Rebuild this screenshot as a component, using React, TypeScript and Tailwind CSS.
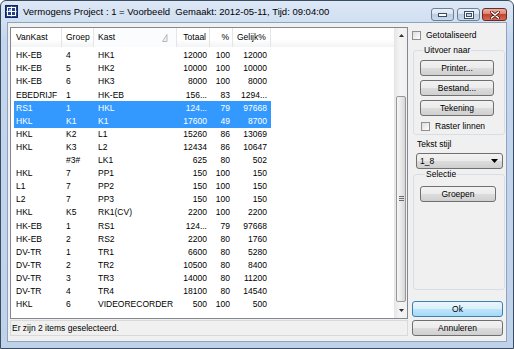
import React from 'react'

type Row = [string, string, string, string, string, string, boolean?]

const rows: Row[] = [
  ['HK-EB', '4', 'HK1', '12000', '100', '12000'],
  ['HK-EB', '5', 'HK2', '10000', '100', '10000'],
  ['HK-EB', '6', 'HK3', '8000', '100', '8000'],
  ['EBEDRIJF', '1', 'HK-EB', '156...', '83', '1294...'],
  ['RS1', '1', 'HKL', '124...', '79', '97668', true],
  ['HKL', 'K1', 'K1', '17600', '49', '8700', true],
  ['HKL', 'K2', 'L1', '15260', '86', '13069'],
  ['HKL', 'K3', 'L2', '12434', '86', '10647'],
  ['', '#3#', 'LK1', '625', '80', '502'],
  ['HKL', '7', 'PP1', '150', '100', '150'],
  ['L1', '7', 'PP2', '150', '100', '150'],
  ['L2', '7', 'PP3', '150', '100', '150'],
  ['HKL', 'K5', 'RK1(CV)', '2200', '100', '2200'],
  ['HK-EB', '1', 'RS1', '124...', '79', '97668'],
  ['HK-EB', '2', 'RS2', '2200', '80', '1760'],
  ['DV-TR', '1', 'TR1', '6600', '80', '5280'],
  ['DV-TR', '2', 'TR2', '10500', '80', '8400'],
  ['DV-TR', '3', 'TR3', '14000', '80', '11200'],
  ['DV-TR', '4', 'TR4', '18100', '80', '14540'],
  ['HKL', '6', 'VIDEORECORDER', '500', '100', '500'],
]

function Button({ label, isDefault = false, className = '' }: { label: string; isDefault?: boolean; className?: string }) {
  const look = isDefault
    ? 'border-[#3c7fb1] bg-[linear-gradient(#eaf6fd_0%,#d9f0fc_50%,#bee6fd_50%,#a7d9f5_100%)]'
    : 'border-[#707070] bg-[linear-gradient(#f2f2f2_0%,#ebebeb_50%,#dddddd_50%,#cfcfcf_100%)]'
  return (
    <div className={`flex h-[16px] items-center justify-center rounded-[3px] border text-[8.5px] leading-none text-black ${look} ${className}`}>
      {label}
    </div>
  )
}

function Check({ label, className = '' }: { label: string; className?: string }) {
  return (
    <div className={`flex h-[10px] items-center ${className}`}>
      <div className="h-[9px] w-[9px] border border-[#8f8f8f] bg-[linear-gradient(135deg,#dcdcdc,#ffffff)]" />
      <span className="ml-[5px] text-[8.5px] leading-none">{label}</span>
    </div>
  )
}

function WinIcon() {
  return (
    <svg width="13" height="13" viewBox="0 0 13 13">
      <rect x="0.5" y="0.5" width="12" height="12" fill="#23408e" stroke="#15275a" />
      <rect x="2.5" y="2.5" width="8" height="8" fill="none" stroke="#ffffff" />
      <path d="M6.5 1.5 V11.5 M1.5 6.5 H11.5" stroke="#ffffff" />
      <rect x="4" y="4" width="2" height="2" fill="#9fb6e8" />
    </svg>
  )
}

export default function App() {
  return (
    <div className="flex h-[349px] w-[514px] flex-col overflow-hidden rounded-t-[6px] border border-[#3b4c60] bg-[linear-gradient(#dde8f6,#c4d6ed_40px,#bfd2ea)] font-['Liberation_Sans',Arial,sans-serif] text-black">
      {/* title bar */}
      <div className="flex h-[21px] shrink-0 items-center pl-[4px]">
        <WinIcon />
        <span className="ml-[5px] whitespace-nowrap text-[9.5px] leading-none">
          Vermogens Project : 1 = Voorbeeld&nbsp; Gemaakt: 2012-05-11, Tijd: 09:04:00
        </span>
        <div className="ml-auto mr-[6px] flex self-start pt-[7px]">
          <div className="flex h-[13px] w-[23px] items-center justify-center rounded-[3px] border border-[#6d7f95] bg-[linear-gradient(#e9f0f8_0%,#d6e2f0_50%,#bccde2_50%,#cbdaeb_100%)]">
            <svg width="9" height="5" viewBox="0 0 9 5">
              <rect x="0.5" y="1.5" width="8" height="3" fill="#ffffff" stroke="#3b4d63" />
            </svg>
          </div>
          <div className="ml-[3px] flex h-[13px] w-[23px] items-center justify-center rounded-[3px] border border-[#6d7f95] bg-[linear-gradient(#e9f0f8_0%,#d6e2f0_50%,#bccde2_50%,#cbdaeb_100%)]">
            <svg width="10" height="8" viewBox="0 0 10 8">
              <rect x="0.5" y="0.5" width="9" height="7" fill="#ffffff" stroke="#3b4d63" />
              <rect x="2.5" y="2.5" width="5" height="3" fill="#c7d5e6" stroke="#3b4d63" />
            </svg>
          </div>
          <div className="ml-[2px] flex h-[13px] w-[25px] items-center justify-center rounded-[3px] border border-[#6b2a22] bg-[linear-gradient(#eab1a4_0%,#d9806f_50%,#c4432f_50%,#d46a53_100%)]">
            <svg width="10" height="8" viewBox="0 0 10 8">
              <path d="M1.5 1 L8.5 7 M8.5 1 L1.5 7" stroke="#4a1a14" strokeWidth="3" strokeLinecap="round" />
              <path d="M1.5 1 L8.5 7 M8.5 1 L1.5 7" stroke="#ffffff" strokeWidth="1.6" strokeLinecap="round" />
            </svg>
          </div>
        </div>
      </div>

      {/* client area */}
      <div className="mx-[6px] flex h-[320px] shrink-0 border border-[#8ea3bd] bg-[#f0f0f0]">
        {/* left column */}
        <div className="flex flex-col pl-[2px] pt-[4px]">
          <div className="flex h-[292px] w-[398px] border border-[#828790] bg-white">
            <div className="flex flex-1 flex-col">
              {/* header */}
              <div className="flex h-[19px] shrink-0 bg-[linear-gradient(#ffffff,#ffffff_60%,#f3f4f6)] text-[8.5px] leading-none">
                <div className="flex w-[51px] items-center border-r border-[#e5e5e5] pl-[5px]">VanKast</div>
                <div className="flex w-[32px] items-center border-r border-[#e5e5e5] pl-[4px]">Groep</div>
                <div className="flex w-[83px] items-center border-r border-[#e5e5e5] bg-[#fafcfe] pl-[4px]">
                  <span>Kast</span>
                  <svg className="ml-[47px]" width="6" height="8" viewBox="0 0 6 8">
                    <path d="M0.5 7.5 L5 0.5 L5 7.5 Z" fill="#f2f2f2" stroke="#a8a8a8" strokeWidth="0.8" />
                  </svg>
                </div>
                <div className="flex w-[33px] items-center justify-end border-r border-[#e5e5e5] pr-[3px]">Totaal</div>
                <div className="flex w-[23px] items-center justify-end border-r border-[#e5e5e5] pr-[3px]">%</div>
                <div className="flex w-[38px] items-center border-r border-[#e5e5e5] pl-[4px]">Gelijk%</div>
                <div className="flex-1" />
              </div>
              {/* rows */}
              <div className="flex flex-col pt-[2px] text-[8.5px] leading-none">
                {rows.map((r, i) => (
                  <div
                    key={i}
                    className={`ml-[3px] flex h-[13.1px] w-[257px] items-center ${r[6] ? 'bg-[#3399ff] text-white' : ''}`}
                  >
                    <div className="w-[48px] pl-[2px]">{r[0]}</div>
                    <div className="w-[32px] pl-[4px]">{r[1]}</div>
                    <div className="w-[83px] pl-[4px]">{r[2]}</div>
                    <div className="w-[33px] pr-[3px] text-right">{r[3]}</div>
                    <div className="w-[23px] pr-[3px] text-right">{r[4]}</div>
                    <div className="w-[38px] pr-[4px] text-right">{r[5]}</div>
                  </div>
                ))}
              </div>
            </div>
            {/* scrollbar */}
            <div className="flex w-[13px] flex-col border-l border-[#e6e6e6] bg-[linear-gradient(90deg,#e8e8e8,#f4f4f4_40%,#f0f0f0)]">
              <div className="flex h-[15px] items-center justify-center">
                <svg width="5" height="3" viewBox="0 0 5 3">
                  <path d="M0 3 L2.5 0 L5 3 Z" fill="#303030" />
                </svg>
              </div>
              <div className="flex flex-1 flex-col pt-[53px]">
                <div className="mx-[1px] flex h-[206px] items-center justify-center rounded-[2px] border border-[#979797] bg-[linear-gradient(90deg,#f6f6f6,#e9e9e9_50%,#d6d6d6)]">
                  <svg width="5" height="6" viewBox="0 0 5 6">
                    <path d="M0 0.5 H5 M0 2.5 H5 M0 4.5 H5" stroke="#6a6a6a" />
                  </svg>
                </div>
              </div>
              <div className="flex h-[15px] items-center justify-center">
                <svg width="5" height="3" viewBox="0 0 5 3">
                  <path d="M0 0 L2.5 3 L5 0 Z" fill="#303030" />
                </svg>
              </div>
            </div>
          </div>
          {/* status bar */}
          <div className="mt-[1px] flex h-[16px] w-[398px] items-center border border-[#d9d9d9] pl-[1px] text-[8.5px] leading-none">
            Er zijn 2 items geselecteerd.
          </div>
        </div>

        {/* right column */}
        <div className="ml-[3px] flex w-[95px] flex-col pt-[7px] text-[8.5px] leading-none">
          <Check label="Getotaliseerd" className="ml-[1px]" />

          <fieldset className="ml-[2px] mt-[5px] w-[92px] rounded-[3px] border border-[#d5dfe5] pb-[3px] pl-[6px] pt-[4px]">
            <legend className="ml-[3px] px-[1px] leading-[11px]">Uitvoer naar</legend>
            <div className="flex flex-col gap-[4px]">
              <Button label="Printer..." className="w-[74px]" />
              <Button label="Bestand..." className="w-[74px]" />
              <Button label="Tekening" className="w-[74px]" />
            </div>
            <Check label="Raster linnen" className="ml-[1px] mt-[5px]" />
          </fieldset>

          <div className="ml-[6px] mt-[4px] leading-[11px]">Tekst stijl</div>
          <div className="ml-[5px] mt-[3px] flex h-[16px] w-[87px] items-center rounded-[3px] border border-[#707070] bg-[linear-gradient(#f2f2f2_0%,#ebebeb_50%,#dddddd_50%,#cfcfcf_100%)] pl-[3px] pr-[4px]">
            <span>1_8</span>
            <svg className="ml-auto" width="7" height="4" viewBox="0 0 7 4">
              <path d="M0 0 L3.5 4 L7 0 Z" fill="#000000" />
            </svg>
          </div>

          <fieldset className="ml-[2px] h-[121px] w-[92px] rounded-[3px] border border-[#d5dfe5] pl-[6px] pt-[6px]">
            <legend className="ml-[5px] px-[1px] leading-[11px]">Selectie</legend>
            <Button label="Groepen" className="w-[76px]" />
          </fieldset>

          <Button label="Ok" isDefault className="ml-[1px] mt-[11px] w-[91px]" />
          <Button label="Annuleren" className="ml-[1px] mt-[3px] w-[91px]" />
        </div>
      </div>
    </div>
  )
}
